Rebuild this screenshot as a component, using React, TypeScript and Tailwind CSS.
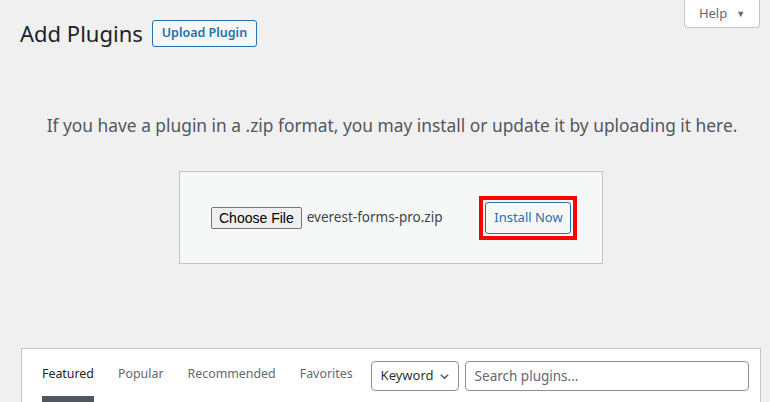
import React from "react";

export default function App() {
  const font = { fontFamily: '"Noto Sans", "Open Sans", sans-serif' };
  return (
    <div className="w-[770px] h-[402px] overflow-hidden bg-[#f0f0f1] text-[#3c434a] relative" style={font}>
      {/* Help tab */}
      <div className="absolute right-[10px] top-0 w-[76px] h-[28px] bg-white border border-t-0 border-[#c3c4c7] rounded-b-[4px] flex items-center justify-center gap-[9px] text-[13px] text-[#646970]">
        <span>Help</span>
        <span className="text-[9px]">▼</span>
      </div>

      <div className="pl-[20px] pt-[19px] flex items-center gap-[9px]">
        <h1 className="text-[22px] leading-[29px] text-[#1d2327] font-normal">Add Plugins</h1>
        <button className="h-[27px] px-[9px] border border-[#2271b1] rounded-[3px] bg-[#f6f7f7] text-[#2271b1] text-[12.5px] font-semibold leading-none">
          Upload Plugin
        </button>
      </div>

      <p className="mt-[66px] pl-[14px] text-center text-[17.35px] text-[#50575e] leading-[22px]">
        If you have a plugin in a .zip format, you may install or update it by uploading it here.
      </p>

      <div className="mt-[35px] ml-[179px] w-[424px] h-[93px] bg-[#f6f7f7] border border-[#c3c4c7] flex items-center pl-[31px]">
        <div className="flex items-center">
          <button
            className="h-[22px] px-[7px] border border-[#767676] rounded-[2px] bg-[#efefef] text-[14px] text-black leading-none"
            style={{ fontFamily: '"Liberation Sans", Arial, sans-serif' }}
          >
            Choose File
          </button>
          <span className="ml-[5px] text-[13.5px] text-[#3c434a]">everest-forms-pro.zip</span>
        </div>
        <div className="ml-[37px] border-[4px] border-[#ff0000] p-[2px]">
          <div className="h-[32px] w-[86px] border border-[#2271b1] rounded-[3px] bg-[#f6f7f7] text-[#2271b1] text-[13px] flex items-center justify-center">
            Install Now
          </div>
        </div>
      </div>

      <div className="mt-[84px] ml-[21px] w-[740px] h-[60px] bg-white border border-[#c3c4c7] flex items-start">
        <div className="flex pl-[20px] text-[12.4px] text-[#646970] pt-[16px] gap-[24px]">
          <div className="relative">
            <span className="text-[#1d2327]">Featured</span>
            <div className="absolute left-0 right-0 top-[31px] h-[6px] bg-[#50575e]"></div>
          </div>
          <span>Popular</span>
          <span>Recommended</span>
          <span>Favorites</span>
        </div>
        <div className="ml-[18px] mt-[12px] flex gap-[6px]">
          <div className="h-[30px] w-[88px] border border-[#8c8f94] rounded-[4px] flex items-center pl-[9px] gap-[5px] text-[13px] text-[#2c3338]">
            <span>Keyword</span>
            <svg width="11" height="11" viewBox="0 0 12 12"><path d="M2 4 L6 8 L10 4" fill="none" stroke="#50575e" strokeWidth="1.6" /></svg>
          </div>
          <div className="h-[30px] w-[284px] border border-[#8c8f94] rounded-[4px] flex items-center pl-[9px] text-[13.5px] text-[#646970]">
            Search plugins...
          </div>
        </div>
      </div>
    </div>
  );
}
